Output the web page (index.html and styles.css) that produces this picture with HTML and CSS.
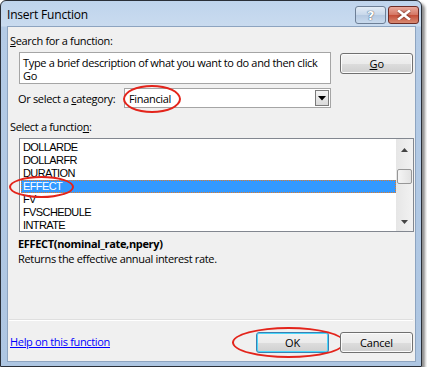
FILE: index.html
```html
<!DOCTYPE html>
<html lang="en">
<head>
  <meta charset="UTF-8">
  <title>Insert Function</title>
  <link rel="stylesheet" href="styles.css">
</head>
<body>
  <div class="window">
    <div class="titlebar">
      <span class="title">Insert Function</span>
      <div class="caption-buttons">
        <span class="cap-btn help">?</span>
        <span class="cap-btn close">
          <svg width="14" height="10" viewBox="0 0 14 10"><path d="M2 1 L12 9 M12 1 L2 9" stroke="#fff" stroke-width="2.6" stroke-linecap="square"/></svg>
        </span>
      </div>
    </div>

    <div class="client">
      <div class="label first"><u>S</u>earch for a function:</div>
      <div class="search-row">
        <div class="textbox">Type a brief description of what you want to do and then click Go</div>
        <button class="btn go"><u>G</u>o</button>
      </div>

      <div class="category-row">
        <span class="cat-label">Or select a <u>c</u>ategory:</span>
        <div class="select">
          <span class="select-value">Financial</span>
          <span class="drop">
            <svg width="8" height="5" viewBox="0 0 8 5"><path d="M0 0 H8 L4 4.5 Z" fill="#000"/></svg>
          </span>
          <span class="mark mark-cat"></span>
        </div>
      </div>

      <div class="label">Select a functio<u>n</u>:</div>
      <div class="listbox">
        <ul class="items">
          <li>DOLLARDE</li>
          <li>DOLLARFR</li>
          <li>DURATION</li>
          <li class="selected">EFFECT</li>
          <li>FV</li>
          <li>FVSCHEDULE</li>
          <li>INTRATE</li>
        </ul>
        <div class="scrollbar">
          <svg class="arrow" width="7" height="4" viewBox="0 0 7 4"><path d="M0 4 H7 L3.5 0 Z" fill="#444"/></svg>
          <div class="track"><div class="thumb"></div></div>
          <svg class="arrow" width="7" height="4" viewBox="0 0 7 4"><path d="M0 0 H7 L3.5 4 Z" fill="#444"/></svg>
        </div>
        <span class="mark mark-effect"></span>
      </div>

      <div class="fn-sig">EFFECT(nominal_rate,npery)</div>
      <div class="fn-desc">Returns the effective annual interest rate.</div>

      <div class="separator"></div>
      <div class="footer">
        <a class="help-link" href="#">Help on this function</a>
        <div class="footer-buttons">
          <button class="btn ok">OK<span class="mark mark-ok"></span></button>
          <button class="btn">Cancel</button>
        </div>
      </div>
    </div>
  </div>
</body>
</html>
```

FILE: styles.css
```css
body {
  margin: 0;
  background: #fff;
  font-family: 'Open Sans', 'Noto Sans', sans-serif;
  font-size: 11px;
  letter-spacing: -0.33px;
  color: #000;
}

.window {
  width: 409px;
  height: 361px;
  border: 1px solid #2a2f38;
  border-radius: 6px 6px 0 0;
  background: linear-gradient(to bottom, #bfd4ec 0, #c9dbef 25px, #b4cbe6 26px, #aec6e2 100%);
  box-shadow: 3px 3px 3px rgba(0, 0, 0, 0.45);
  display: flex;
  flex-direction: column;
  padding: 0 5px 4px 6px;
}

.titlebar {
  height: 25px;
  display: flex;
  align-items: center;
  justify-content: space-between;
}

.title {
  font-size: 12px;
  letter-spacing: -0.2px;
  margin-top: 2px;
}

.caption-buttons {
  display: flex;
  gap: 2px;
  margin-top: 3px;
  margin-right: -3px;
}

.cap-btn {
  width: 29px;
  height: 16px;
  border: 1px solid #6d7f96;
  border-radius: 3px;
  display: flex;
  align-items: center;
  justify-content: center;
}

.help {
  background: linear-gradient(to bottom, #e3ecf6 0, #c7d7ea 50%, #b5c9e1 51%, #c9daed 100%);
  color: #fff;
  font-family: 'DejaVu Sans', sans-serif;
  font-weight: bold;
  font-size: 13px;
  text-shadow: 0 0 1px #3d4e66, 0 0 1px #3d4e66;
}

.close {
  border-color: #6d2b25;
  background: linear-gradient(to bottom, #e9a99c 0, #d47563 50%, #c44c37 51%, #d88a72 100%);
}

.close svg path {
  filter: drop-shadow(0 0 1px #5a1d14);
}

.client {
  flex: 1;
  background: #f0f0f0;
  border: 1px solid #8da4c0;
  display: flex;
  flex-direction: column;
  padding: 0 2px 0 1px;
}

.label {
  margin-left: 1px;
  line-height: 15px;
}

.label.first {
  margin-top: 6px;
}

.search-row {
  display: flex;
  align-items: flex-start;
  margin-top: 4px;
  margin-left: 10px;
}

.textbox {
  width: 309px;
  height: 27px;
  background: #fff;
  border: 1px solid #a5a5a5;
  padding: 3px 0 0 3px;
  line-height: 13px;
  margin-right: 9px;
}

.btn {
  font-family: inherit;
  font-size: 11px;
  letter-spacing: -0.2px;
  color: #000;
  width: 73px;
  height: 21px;
  border: 1px solid #707070;
  border-radius: 3px;
  background: linear-gradient(to bottom, #f2f2f2 0, #ebebeb 50%, #dddddd 51%, #cfcfcf 100%);
  box-shadow: inset 0 0 0 1px #fbfbfb;
  padding: 0;
  position: relative;
}

.go {
  margin-top: 1px;
}

.category-row {
  display: flex;
  align-items: center;
  margin-top: 4px;
  margin-left: 9px;
  height: 20px;
}

.cat-label {
  width: 106px;
}

.select {
  position: relative;
  width: 205px;
  height: 18px;
  background: #fff;
  border: 1px solid #a5a5a5;
  display: flex;
  align-items: center;
  justify-content: space-between;
}

.select-value {
  margin-left: 4px;
}

.drop {
  width: 14px;
  height: 16px;
  margin-right: 1px;
  border: 1px solid #7a7a7a;
  box-sizing: border-box;
  background: linear-gradient(to bottom, #f4f4f4, #dadada);
  display: flex;
  align-items: center;
  justify-content: center;
}

.category-row + .label {
  margin-top: 11px;
}

.listbox {
  position: relative;
  display: flex;
  margin-top: 4px;
  margin-left: 10px;
  width: 393px;
  height: 92px;
  background: #fff;
  border: 1px solid #828790;
}

.items {
  list-style: none;
  margin: 0;
  padding: 2px 0 0 1px;
  flex: 1;
  font-family: 'Liberation Sans', Arial, sans-serif;
  font-size: 11px;
  letter-spacing: -0.6px;
}

.items li {
  height: 13px;
  line-height: 13px;
  padding-left: 2px;
}

.items li.selected {
  background: #3399ff;
  color: #fff;
  outline: 1px dotted #e07b2a;
  outline-offset: -1px;
}

.scrollbar {
  width: 17px;
  background: linear-gradient(to right, #e6e6e6, #f2f2f2);
  display: flex;
  flex-direction: column;
  align-items: center;
  justify-content: space-between;
  padding: 9px 0 7px;
  box-sizing: border-box;
}

.track {
  flex: 1;
  width: 100%;
  position: relative;
}

.thumb {
  position: absolute;
  left: 1px;
  top: 17px;
  width: 13px;
  height: 13px;
  border: 1px solid #979797;
  border-radius: 2px;
  background: linear-gradient(to right, #f5f5f5, #e2e2e2);
}

.fn-sig {
  margin-top: 4px;
  margin-left: 9px;
  font-weight: bold;
  line-height: 15px;
}

.fn-desc {
  margin-left: 9px;
  line-height: 16px;
}

.separator {
  margin-top: auto;
  height: 1px;
  background: #dfdfdf;
  border-bottom: 1px solid #fff;
}

.footer {
  display: flex;
  justify-content: space-between;
  align-items: center;
  height: 40px;
}

.help-link {
  color: #0000ff;
  margin-left: 1px;
}

.footer-buttons {
  display: flex;
  gap: 11px;
  margin-top: 3px;
}

.ok {
  border-color: #3c7fb1;
  box-shadow: inset 0 0 0 1px #48d7fb;
}

.mark {
  position: absolute;
  border: 2px solid #e3241b;
  border-radius: 50%;
  pointer-events: none;
}

.mark-cat {
  left: -2px;
  top: -4px;
  width: 54px;
  height: 24px;
}

.mark-effect {
  left: -11px;
  top: 37px;
  width: 61px;
  height: 18px;
}

.mark-ok {
  left: -25px;
  top: -6px;
  width: 109px;
  height: 27px;
}
```
